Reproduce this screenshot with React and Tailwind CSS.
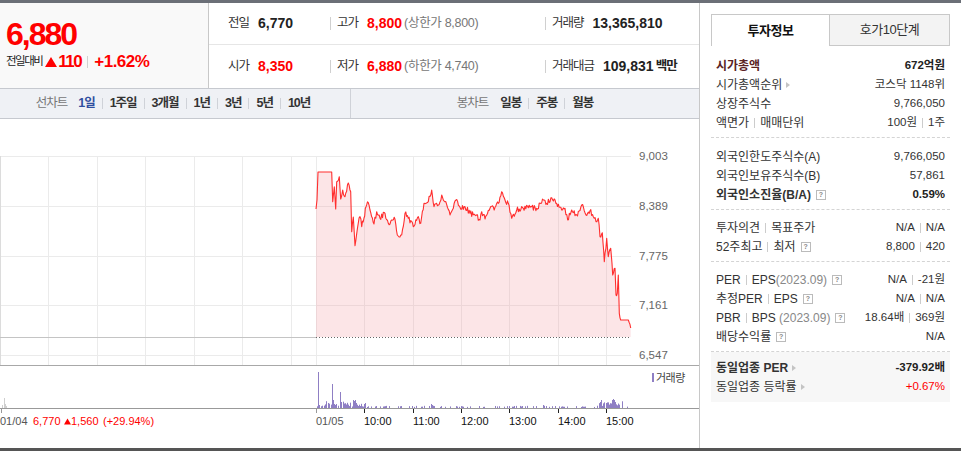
import React from "react";

const keypts = [[316,209],[317,200],[318,172],[331.7,172],[332.7,201.7],[334.3,186.7],[335.7,209],[336.7,181.7],[339.3,176.7],[340.7,199],[342.7,190],[345,196.7],[348.3,183],[350.7,191.7],[351.7,231.7],[353.3,217],[355,245.7],[358.3,223],[360,216.7],[361.7,226.7],[364,218],[366,206.7],[368.3,202.7],[370,210],[374,224],[376.7,211.7],[380,218.3],[385,213.3],[388.3,223.3],[391.7,220],[395,219.3],[397.3,235],[401.7,235],[405,213.3],[408.3,218.3],[413.3,226.7],[418.3,216.7],[420.7,223.3],[424,203.3],[428.3,201.7],[431.7,190],[434,206.7],[438.3,205],[441.7,195],[445,201.7],[450,215],[453.3,208.3],[456,200],[460,207.3],[465,206.7],[470,213.3],[475,215],[480,220],[481.7,211.7],[485,219],[490,208.3],[495,207.3],[498.3,203.3],[501.7,191.7],[505,200],[508.3,203.3],[511.7,218.3],[516.7,210],[523.3,208.3],[530,207.3],[536.7,208.3],[543.3,200],[546.7,203.3],[551.7,197.7],[556.7,203.3],[560,207.3],[565,208.3],[567.7,220],[571.7,210],[576.7,215],[581.7,205],[586,215],[590,210.7],[593.3,216.7],[596,221.7],[598.3,218.3],[600,236.7],[602.3,232.7],[604.3,261.7],[606.7,238.3],[608.3,256.7],[610.7,248.3],[612.7,275],[615,268.3],[616,295],[617.3,293.3],[618.3,275],[619.3,313.3],[620.7,320],[628.3,320],[630.7,328]];

function makeRand(seed) {
  let s = seed;
  return () => {
    s = (s * 16807) % 2147483647;
    return s / 2147483647;
  };
}

function buildLine() {
  const rand = makeRand(987654);
  const pts = [];
  for (let i = 0; i < keypts.length - 1; i++) {
    const [x0, y0] = keypts[i];
    const [x1, y1] = keypts[i + 1];
    const flat = Math.abs(y1 - y0) < 0.01 && (y0 === 172 || y0 === 320);
    const dx = x1 - x0;
    const steps = Math.max(1, Math.round(dx / 0.8));
    for (let k = 0; k < steps; k++) {
      const t = k / steps;
      const x = x0 + dx * t;
      let y = y0 + (y1 - y0) * t;
      if (!flat && k > 0 && x > 337) y += (rand() - 0.5) * 5.5;
      pts.push([x, y]);
    }
  }
  pts.push(keypts[keypts.length - 1]);
  return pts;
}

function buildBars() {
  const rand = makeRand(24680);
  const bars = [];
  const spikes = { 318: 36, 319: 3, 332: 24, 333: 8, 334: 4, 340: 16, 341: 6, 353: 8, 354: 7, 355: 8, 356: 5, 364: 4, 365: 5, 431: 4, 432: 3, 543: 3, 600: 6, 601: 8, 606: 5, 612: 8, 613: 9, 614: 8, 615: 6 };
  for (let x = 317; x <= 630; x++) {
    const r = rand();
    let h = 0;
    if (x < 322) h = r < 0.4 ? 1 + rand() * 2 : 0;
    else if (x < 362) h = r < 0.8 ? 1 + rand() * 6 : 0;
    else if (x >= 597 && x <= 622) h = r < 0.8 ? 2 + rand() * 5 : 0;
    else h = r < 0.3 ? 1 + rand() * 1.2 : 0;
    if (spikes[x] !== undefined) h = spikes[x];
    if (h > 0) bars.push([x, h]);
  }
  return bars;
}

const LINE = buildLine();
const BARS = buildBars();

function Chart() {
  const hLines = [156.5, 206.5, 256.5, 305.5, 355.5];
  const vLines = [48.5, 97.5, 145.5, 194.5, 242.5, 291.5, 316.5, 364.5, 413.5, 461.5, 509.5, 558.5, 606.5];
  const yLabels = [["9,003", 156], ["8,389", 206], ["7,775", 256], ["7,161", 305], ["6,547", 355]];
  const hours = [["10:00", 364], ["11:00", 413], ["12:00", 461], ["13:00", 509], ["14:00", 558], ["15:00", 606]];
  const linePts = LINE.map(([x, y]) => `${x.toFixed(1)},${y.toFixed(1)}`).join(" ");
  const fillPts = linePts + " 630.7,337 316,337";
  const font = { fontFamily: '"Liberation Sans", "Noto Sans CJK KR", sans-serif' };
  return (
    <svg width="699" height="329" viewBox="0 119 699 329" className="block" style={font}>
      {hLines.map((y) => (
        <line key={y} x1="0" x2="631" y1={y} y2={y} stroke="#ebebeb" strokeWidth="1" />
      ))}
      {vLines.map((x) => (
        <line key={x} x1={x} x2={x} y1="156" y2="365" stroke="#ebebeb" strokeWidth="1" />
      ))}
      <line x1="0.5" x2="0.5" y1="156" y2="365" stroke="#dcdcdc" strokeWidth="1" />
      <polygon points={fillPts} fill="#f5a0a8" fillOpacity="0.28" />
      <line x1="0" x2="316" y1="337.5" y2="337.5" stroke="#c4c4c4" strokeWidth="1" />
      <line x1="316" x2="631" y1="337.5" y2="337.5" stroke="#666" strokeWidth="1" strokeDasharray="1 2" />
      <polyline points={linePts} fill="none" stroke="#ff2e2e" strokeWidth="1.1" strokeLinejoin="round" />
      <line x1="0" x2="699" y1="365.5" y2="365.5" stroke="#a8a8a8" strokeWidth="1" />
      {yLabels.map(([t, y]) => (
        <text key={t} x="639" y={y + 4} fontSize="11.5" fill="#666">{t}</text>
      ))}
      <rect x="2" y="405" width="1" height="3" fill="#cfcfcf" />
      <rect x="4" y="398" width="1" height="10" fill="#cfcfcf" />
      <rect x="5" y="404" width="1" height="4" fill="#cfcfcf" />
      <rect x="6" y="406" width="1" height="2" fill="#cfcfcf" />
      {BARS.map(([x, h]) => (
        <rect key={x} x={x} y={408 - h} width="1" height={h} fill="#8f7fc4" />
      ))}
      <rect x="652" y="373" width="2" height="9" fill="#8f7fc4" />
      <text x="656" y="382" fontSize="11" fill="#444" letterSpacing="-0.5">거래량</text>
      <line x1="0" x2="699" y1="408.5" y2="408.5" stroke="#999" strokeWidth="1" />
      <line x1="1.5" x2="1.5" y1="409" y2="413" stroke="#999" />
      <line x1="316.5" x2="316.5" y1="409" y2="413" stroke="#999" />
      {hours.map(([t, x]) => (
        <line key={t} x1={x + 0.5} x2={x + 0.5} y1="409" y2="413" stroke="#222" />
      ))}
      <text x="0" y="425" fontSize="11" fill="#555">01/04</text>
      <text x="33" y="425" fontSize="11" fill="#f00">6,770</text>
      <polygon points="64,424.5 67.5,418.5 71,424.5" fill="#f00" />
      <text x="71" y="425" fontSize="11" fill="#f00">1,560</text>
      <text x="103" y="425" fontSize="11" fill="#f00">(+29.94%)</text>
      <text x="316" y="425" fontSize="11" fill="#555">01/05</text>
      {hours.map(([t, x]) => (
        <text key={t} x={x} y="425" fontSize="11" fill="#111">{t}</text>
      ))}
    </svg>
  );
}

const Q = () => (
  <span className="inline-flex items-center justify-center w-[10px] h-[10px] border border-[#bbb] bg-white text-[7px] leading-none text-[#888] ml-[5px] font-bold">?</span>
);
const Arr = () => (
  <span className="inline-block w-0 h-0 border-y-[3.5px] border-y-transparent border-l-[4px] border-l-[#c4c4c4] ml-[4px]" />
);
const Bar = () => <span className="inline-block w-px h-[10px] bg-[#ccc] mx-[5px]" />;
const Gray = ({ children }) => <span className="text-[#888]">{children}</span>;

function Row({ l, r, bold, rcls = "" }) {
  return (
    <div className={"flex items-center justify-between h-[19px] px-[5px] " + (bold ? "font-bold" : "")}>
      <div className="flex items-center">{l}</div>
      <div className={"flex items-center text-[11.5px] " + rcls}>{r}</div>
    </div>
  );
}

function Stat({ label, value, vcls = "text-[#222]", sub, w, sep, pl = "" }) {
  return (
    <div className={"flex items-center " + w + " " + pl}>
      {sep && <span className="w-px h-[13px] bg-[#d0d0d0] mr-[6px]" />}
      <span className="text-[12.5px] tracking-[-1px] text-[#333]">{label}</span>
      <span className={"ml-[9px] text-[14px] font-bold " + vcls}>{value}</span>
      {sub}
    </div>
  );
}

export default function App() {
  return (
    <div
      className="w-[961px] h-[451px] flex flex-col bg-white overflow-hidden text-[#333]"
      style={{ fontFamily: '"Liberation Sans", "Noto Sans CJK KR", sans-serif' }}
    >
      <div className="h-[3px] bg-[#6b6f77]" />
      <div className="flex flex-1 min-h-0">
        <div className="w-[700px] border-r border-[#c8c8c8] flex flex-col">
          <div className="h-[85px] flex">
            <div className="w-[209px] bg-[#f9f9f9] border-r border-[#c8c8c8] pl-[6px] pt-[15px]">
              <div className="text-[32px] leading-[32px] font-bold tracking-[-2px] text-[#f00]">6,880</div>
              <div className="flex items-center h-[20px] mt-[2px]">
                <span className="text-[11.5px] tracking-[-1.5px] text-[#222]">전일대비</span>
                <svg width="12" height="10" viewBox="0 0 12 10" className="ml-[3px]">
                  <polygon points="0,10 6,0 12,10" fill="#f00" />
                </svg>
                <span className="ml-[1px] text-[17px] font-bold tracking-[-1.5px] text-[#f00]">110</span>
                <span className="w-px h-[12px] bg-[#d0d0d0] mx-[6px]" />
                <span className="text-[17px] font-bold tracking-[-0.5px] text-[#f00]">+1.62%</span>
              </div>
            </div>
            <div className="flex-1 flex flex-col">
              <div className="h-[42px] border-b border-[#e6e6e6] flex items-center">
                <Stat w="w-[121px]" pl="pl-[19px]" label="전일" value="6,770" />
                <Stat
                  w="w-[215px]"
                  sep
                  label="고가"
                  value="8,800"
                  vcls="text-[#f00]"
                  sub={<span className="ml-[2px] text-[12.5px] tracking-[-0.3px] text-[#777]">(상한가 8,800)</span>}
                />
                <Stat w="flex-1" sep label="거래량" value="13,365,810" />
              </div>
              <div className="flex-1 flex items-center">
                <Stat w="w-[121px]" pl="pl-[19px]" label="시가" value="8,350" vcls="text-[#f00]" />
                <Stat
                  w="w-[215px]"
                  sep
                  label="저가"
                  value="6,880"
                  vcls="text-[#f00]"
                  sub={<span className="ml-[2px] text-[12.5px] tracking-[-0.3px] text-[#777]">(하한가 4,740)</span>}
                />
                <Stat
                  w="flex-1"
                  sep
                  label="거래대금"
                  value="109,831"
                  sub={<span className="ml-[2px] text-[12.5px] font-bold tracking-[-1px] text-[#222]">백만</span>}
                />
              </div>
            </div>
          </div>
          <div className="h-[31px] border-y border-[#c6c9cf] bg-[#eff1f5] flex text-[12.5px] tracking-[-1px]">
            <div className="w-[351px] border-r border-[#cfd2d8] flex items-center justify-center pr-[4px]">
              <span className="text-[#777]">선차트</span>
              <span className="ml-[11px] font-bold text-[#2f4fa0]">1일</span>
              {["1주일", "3개월", "1년", "3년", "5년", "10년"].map((t) => (
                <React.Fragment key={t}>
                  <span className="w-px h-[11px] bg-[#cfd2d8] mx-[7px]" />
                  <span className="font-bold text-[#333]">{t}</span>
                </React.Fragment>
              ))}
            </div>
            <div className="flex-1 flex items-center justify-center">
              <span className="text-[#777]">봉차트</span>
              <span className="ml-[12px] font-bold text-[#333]">일봉</span>
              {["주봉", "월봉"].map((t) => (
                <React.Fragment key={t}>
                  <span className="w-px h-[11px] bg-[#cfd2d8] mx-[7px]" />
                  <span className="font-bold text-[#333]">{t}</span>
                </React.Fragment>
              ))}
            </div>
          </div>
          <div className="flex-1 min-h-0">
            <Chart />
          </div>
        </div>
        <div className="flex-1 px-[11px] pt-[11px] text-[12px]">
          <div className="flex h-[32px] text-[13px]">
            <div className="w-[118px] border-l border-t border-[#c8c8c8] bg-white flex items-center justify-center font-bold text-[#111] tracking-[-0.5px]">투자정보</div>
            <div className="flex-1 border border-[#c8c8c8] bg-[#f3f3f3] flex items-center justify-center text-[#333] tracking-[-0.5px]">호가10단계</div>
          </div>
          <div className="pt-[10px] pb-[5px] border-b border-dashed border-[#d4d4d4]">
            <Row bold l={<span className="text-[#5a2323]">시가총액</span>} r={<span className="text-[#222]">672억원</span>} />
            <Row l={<>시가총액순위<Arr /></>} r={<span>코스닥 1148위</span>} />
            <Row l="상장주식수" r="9,766,050" />
            <Row l={<>액면가<Bar />매매단위</>} r={<>100원<Bar />1주</>} />
          </div>
          <div className="pt-[9px] pb-[5px] border-b border-dashed border-[#d4d4d4]">
            <Row l="외국인한도주식수(A)" r="9,766,050" />
            <Row l="외국인보유주식수(B)" r="57,861" />
            <Row bold l={<>외국인소진율(B/A)<Q /></>} r={<span className="text-[#222]">0.59%</span>} />
          </div>
          <div className="pt-[8px] pb-[5px] border-b border-dashed border-[#d4d4d4]">
            <Row l={<>투자의견<Bar />목표주가</>} r={<>N/A<Bar />N/A</>} />
            <Row l={<>52주최고<Bar />최저<Q /></>} r={<>8,800<Bar />420</>} />
          </div>
          <div className="pt-[8px] pb-[5px] border-b border-dashed border-[#d4d4d4]">
            <Row l={<>PER<Bar />EPS<Gray>(2023.09)</Gray><Q /></>} r={<>N/A<Bar />-21원</>} />
            <Row l={<>추정PER<Bar />EPS<Q /></>} r={<>N/A<Bar />N/A</>} />
            <Row l={<>PBR<Bar />BPS <Gray>&nbsp;(2023.09)</Gray><Q /></>} r={<>18.64배<Bar />369원</>} />
            <Row l={<>배당수익률<Q /></>} r="N/A" />
          </div>
          <div className="bg-[#f7f7f7] py-[6px]">
            <Row bold l={<>동일업종 PER<Arr /></>} r={<span className="text-[#222]">-379.92배</span>} />
            <Row l={<>동일업종 등락률<Arr /></>} r={<span className="text-[#f00]">+0.67%</span>} />
          </div>
        </div>
      </div>
      <div className="h-[3px] bg-[#555]" />
    </div>
  );
}
